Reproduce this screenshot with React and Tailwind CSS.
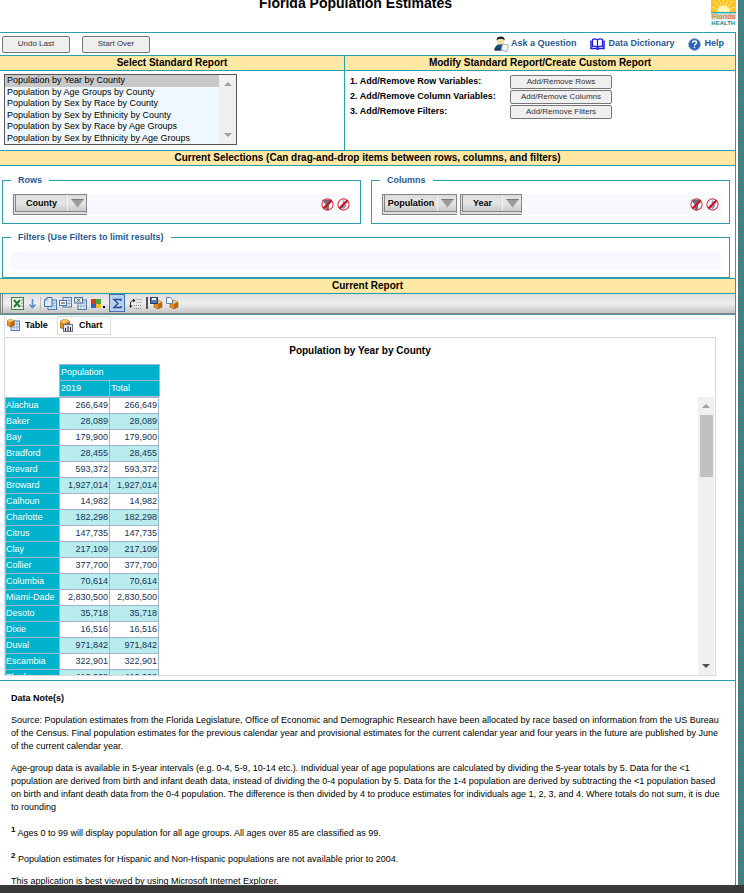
import React from "react";

const reports = [
  "Population by Year by County",
  "Population by Age Groups by County",
  "Population by Sex by Race by County",
  "Population by Sex by Ethnicity by County",
  "Population by Sex by Race by Age Groups",
  "Population by Sex by Ethnicity by Age Groups",
];

const counties = [
  ["Alachua", "266,649"],
  ["Baker", "28,089"],
  ["Bay", "179,900"],
  ["Bradford", "28,455"],
  ["Brevard", "593,372"],
  ["Broward", "1,927,014"],
  ["Calhoun", "14,982"],
  ["Charlotte", "182,298"],
  ["Citrus", "147,735"],
  ["Clay", "217,109"],
  ["Collier", "377,700"],
  ["Columbia", "70,614"],
  ["Miami-Dade", "2,830,500"],
  ["Desoto", "35,718"],
  ["Dixie", "16,516"],
  ["Duval", "971,842"],
  ["Escambia", "322,901"],
  ["Flagler", "110,008"],
];

function Band({ children, className = "" }) {
  return (
    <h2 className={`h-[14px] bg-[#ffe8a3] text-center text-[10px] leading-[14px] font-bold text-black ${className}`}>
      {children}
    </h2>
  );
}

function PushButton({ children, className }) {
  return (
    <button className={`rounded-[2px] border border-[#767676] bg-[#efefef] text-center text-[8px] text-[#333] ${className}`}>
      {children}
    </button>
  );
}

function Logo() {
  return (
    <svg viewBox="0 0 25 26" className="h-[26px] w-[25px] shrink-0" role="img" aria-label="Florida Health">
      <rect width="25" height="12" fill="#fdc41f" />
      <g stroke="#fff3b0" strokeWidth="0.8">
        <path d="M12.5 11 L1 7M12.5 11 L3 1M12.5 11 L8 0M12.5 11 L12.5 0M12.5 11 L17 0M12.5 11 L22 1M12.5 11 L24 7" />
      </g>
      <path d="M6 12a6.5 6.5 0 0 1 13 0z" fill="#fff6b8" />
      <rect y="12" width="25" height="1.5" fill="#2ba8b0" />
      <rect y="13.5" width="25" height="6" fill="#bfe0dc" />
      <text x="1" y="19" fontSize="7" fontWeight="bold" fill="#ee7f3c" fontFamily="Liberation Sans, sans-serif">Florida</text>
      <text x="0.3" y="25" fontSize="6" fontWeight="bold" fill="#008b95" fontFamily="Liberation Sans, sans-serif">HEALTH</text>
    </svg>
  );
}

function PersonIcon() {
  return (
    <svg viewBox="0 0 15 16" className="h-4 w-[15px]" aria-hidden="true">
      <path d="M0.500 14.500q0-6.500 6.500-6.500t6 6.500z" fill="#14507d" />
      <circle cx="6.500" cy="5" r="3.600" fill="#f3dda0" />
      <path d="M2.500 4.500q0-4 4.200-4t4 4q-1-1.800-4-1.800t-4.200 1.800z" fill="#1d1d1d" />
      <path d="M8.500 8l6 1-1.500 6.500-6-1.500z" fill="#f2f2f2" stroke="#888" strokeWidth="0.600" />
      <path d="M0.500 12.500h6v2h-6z" fill="#143a5c" />
    </svg>
  );
}

function BookIcon() {
  return (
    <svg viewBox="0 0 15 12" className="h-3 w-[15px]" aria-hidden="true" fill="none" stroke="#1b1be0">
      <path d="M7.500 9.500V2Q5 0 2.500 1.500V8.500Q5 7.500 7.500 9.500Q10 7.500 12.500 8.500V1.500Q10 0 7.500 2" fill="#fff" strokeWidth="1.200" />
      <path d="M1 2.500V10.500H6.500L7.500 11.500L8.500 10.500H14V2.500" strokeWidth="1.500" />
    </svg>
  );
}

function HelpIcon() {
  return (
    <svg viewBox="0 0 13 13" className="size-[13px]" aria-hidden="true">
      <circle cx="6.500" cy="6.500" r="6" fill="#2d62b8" stroke="#9db7dc" />
      <path d="M4.500 5q0-2 2-2t2 1.700q0 1-1 1.500t-1 1.500" fill="none" stroke="#fff" strokeWidth="1.400" />
      <rect x="5.800" y="8.700" width="1.400" height="1.400" fill="#fff" />
    </svg>
  );
}

function Triangle({ down = false, className = "" }) {
  return (
    <svg viewBox="0 0 8 4" className={`h-1 w-2 ${className}`} aria-hidden="true" fill="currentColor">
      <path d={down ? "M0 0h8L4 4z" : "M0 4h8L4 0z"} />
    </svg>
  );
}

function FieldPill({ label, className }) {
  return (
    <button
      className={`flex h-[21px] items-stretch border-t border-r border-b-[4px] border-l-[3px] border-double border-[#858585] bg-linear-to-b from-[#dcdcdc] via-[#e6e6e6] to-[#c9c9c9] text-[9px] font-bold text-black ${className}`}
    >
      <span className="flex flex-1 items-center justify-center leading-[16px]">{label}</span>
      <span className="flex w-[19px] items-center justify-center border-l border-[#f3f3f3]">
        <svg viewBox="0 0 13 9" className="h-[9px] w-[13px]" aria-hidden="true">
          <path d="M0.500 0.500h12L6.500 8.500z" fill="#9a9a9a" stroke="#b9b9b9" />
          <path d="M0.500 0.500h12" stroke="#777" />
        </svg>
      </span>
    </button>
  );
}

function ClearIcon({ kind }) {
  return (
    <svg viewBox="0 0 13 13" className="size-[13px]" aria-hidden="true" fill="none">
      {kind === "filter" ? (
        <path d="M1.500 2h9L7.500 7v5h-2V7z" fill="#66748a" stroke="#444" strokeWidth="0.600" />
      ) : (
        <path d="M6.500 2.500v7M4 7l2.500 3L9 7" stroke="#7f9dc9" strokeWidth="1.600" />
      )}
      <circle cx="6.500" cy="6.500" r="5.600" stroke="#dc3a44" strokeWidth="1.100" />
      <path d="M2.400 10.600l8.200-8.200" stroke="#d0141f" strokeWidth="2.200" />
    </svg>
  );
}

function Shelf({ title, children }) {
  return (
    <fieldset className="min-w-0 border border-[#2a9dae] px-2 pb-2">
      <legend className="px-[7px] text-[9px] leading-[13px] font-bold text-[#1f5a94]">{title}</legend>
      <div className="mt-[7px] flex h-[21px] items-center gap-[3px] bg-[#f8f8ff] pr-[2px] pl-[2px]">
        {children}
        <div className="ml-auto flex gap-[3px]">
          <button aria-label={`Clear ${title} filters`}><ClearIcon kind="filter" /></button>
          <button aria-label={`Clear ${title} sorting`}><ClearIcon kind="sort" /></button>
        </div>
      </div>
    </fieldset>
  );
}

function Sheet({ x = 4, y = 3 }) {
  return (
    <g>
      <rect x={x} y={y} width="8.500" height="9.500" fill="#eef4fc" stroke="#4d76ad" />
      <path d={`M${x} ${y + 3}h8.500M${x} ${y + 6}h8.500M${x + 3} ${y}v9.500M${x + 6} ${y}v9.500`} stroke="#7d9fcf" strokeWidth="0.800" />
    </g>
  );
}

function Cube({ x = 0, y = 0, s = 1 }) {
  return (
    <g transform={`translate(${x} ${y}) scale(${s})`}>
      <path d="M0 2L4 0l4 2v5L4 9 0 7z" fill="#e48f1e" stroke="#8a4d0a" strokeWidth="0.600" />
      <path d="M0 2l4 2 4-2L4 0z" fill="#f9c265" />
      <path d="M4 4l4-2v5L4 9z" fill="#b9650d" />
    </g>
  );
}

function ToolIcon({ children }) {
  return (
    <svg viewBox="0 0 13 13" className="size-[13px]" aria-hidden="true" fill="none">
      {children}
    </svg>
  );
}

function Tool({ label, className = "", children }) {
  return (
    <button aria-label={label} className={`shrink-0 ${className}`}>
      <ToolIcon>{children}</ToolIcon>
    </button>
  );
}

function Toolbar() {
  return (
    <div className="flex h-5 items-center border-b border-l-[3px] border-double border-[#858585] bg-linear-to-b from-[#dedede] via-[#efefef] to-[#c4c4c4] pb-px pl-2">
      <Tool label="Export to Excel">
        <rect x="0.500" y="0.500" width="12" height="12" fill="#eaf5ea" stroke="#3c8446" />
        <path d="M3 3l6 7M9 3l-6 7" stroke="#217a34" strokeWidth="2" />
        <path d="M10 3h2M10 6h2M10 9h2" stroke="#5aa465" />
      </Tool>
      <Tool label="Sort" className="ml-[2px]">
        <path d="M6.500 2v8M3.500 7.500l3 3 3-3" stroke="#5b8fc0" strokeWidth="1.600" />
      </Tool>
      <span className="ml-px h-[13px] w-px bg-[#bdbdbd]" />
      <Tool label="Copy table" className="ml-[3px]">
        <Sheet />
        <path d="M3 0.500h5v9H0.500V3z" fill="#dce9f8" stroke="#4671ab" />
        <path d="M0.500 3H3V0.500" stroke="#4671ab" strokeWidth="0.800" />
      </Tool>
      <Tool label="Collapse rows" className="ml-[2px]">
        <Sheet y={0.5} x={4} />
        <rect x="0.500" y="3.500" width="7" height="5" fill="#fff" stroke="#4671ab" />
        <path d="M2 6h4" stroke="#333" />
      </Tool>
      <Tool label="Hide empty" className="ml-[2px]">
        <Sheet />
        <rect x="0.500" y="0.500" width="8" height="5.500" fill="#f2f6ea" stroke="#4671ab" />
        <path d="M2.500 1.500l4 3.500M6.500 1.500l-4 3.500" stroke="#555e2c" />
      </Tool>
      <Tool label="Colors" className="ml-[3px]">
        <rect x="1" y="2" width="5" height="5" fill="#d63a2d" />
        <rect x="6" y="2" width="5" height="5" fill="#4fa63b" />
        <rect x="1" y="7" width="5" height="4" fill="#2769c7" />
        <rect x="6" y="7" width="5" height="4" fill="#f4bd27" />
      </Tool>
      <span className="mt-2 h-[2px] w-[2px] bg-black" />
      <Tool label="Totals" className="ml-1 h-[18px] w-4 border border-[#3c6fb5] bg-[#b9d0f0] px-px">
        <path d="M10 4V2.500H3l4 4-4 4h7V9" stroke="#254f92" strokeWidth="1.400" />
      </Tool>
      <Tool label="Swap axes" className="ml-1">
        <path d="M1.500 10V6q0-2.500 3-2.500" stroke="#333" />
        <path d="M4 1.500l2.500 2-2.500 2zM0 8.500h3.500L1.500 11z" fill="#222" />
        <path d="M7.500 2.500h5M7.500 5.500h5M5 8.500h7.500M5 11.500h7.500" stroke="#888" strokeDasharray="1 1" />
      </Tool>
      <span className="ml-[4px] h-3 w-[2px] bg-[#555]" />
      <Tool label="Save view" className="ml-[2px]">
        <Cube x={4} y={3} />
        <rect x="0.500" y="0.500" width="7" height="6" fill="#4f79b8" stroke="#253e6b" />
        <path d="M2 1h4v2H2z" fill="#fff" />
      </Tool>
      <Tool label="Open view" className="ml-[3px]">
        <Cube x={4} y={3} />
        <path d="M0.500 0.500h4l2 2v4h-6z" fill="#fff" stroke="#5f86b8" />
      </Tool>
    </div>
  );
}

function CountyTable() {
  return (
    <table className="border-collapse text-[9px] leading-[12px] text-[#16325c]">
      <tbody>
        {counties.map(([name, value], i) => (
          <tr key={name} className={`h-4 ${i % 2 ? "bg-[#b9eced]" : "bg-white"}`}>
            <th scope="row" className="w-[54px] border border-[#a3b5cc] bg-[#00b2cb] p-0 pb-[2px] text-left font-normal whitespace-nowrap text-white">
              {name}
            </th>
            <td className="w-[50px] border border-[#a3b5cc] p-0 pr-px pb-[2px] text-right">{value}</td>
            <td className="w-[49px] border border-[#a3b5cc] p-0 pr-px pb-[2px] text-right">{value}</td>
          </tr>
        ))}
      </tbody>
    </table>
  );
}

export default function App() {
  return (
    <div className="flex h-screen flex-col overflow-hidden bg-white font-['Liberation_Sans',Arial,sans-serif] text-black">
      <div className="flex min-h-0 flex-1">
        <div className="min-w-0 flex-1 overflow-hidden">
          <header className="flex h-8">
            <h1 className="flex-1 text-center text-[14px] leading-[6px] font-bold">Florida Population Estimates</h1>
            <Logo />
          </header>

          <main className="border-t border-r border-[#2a9dae]">
            <div className="flex h-[22px] items-center pr-[11px] pl-[2px]">
              <PushButton className="h-[17px] w-[68px]">Undo Last</PushButton>
              <PushButton className="ml-3 h-[17px] w-[68px]">Start Over</PushButton>
              <nav className="ml-auto flex items-center gap-[14px] text-[9px] font-bold text-[#1f5a94]">
                <a href="#ask" className="flex items-center gap-[2px]"><PersonIcon />Ask a Question</a>
                <a href="#dictionary" className="flex items-center gap-[3px]"><BookIcon />Data Dictionary</a>
                <a href="#help" className="flex items-center gap-[3px]"><HelpIcon />Help</a>
              </nav>
            </div>

            <div className="grid grid-cols-[344fr_391fr] border-y border-[#2a9dae]">
              <section>
                <Band>Select Standard Report</Band>
                <div className="h-20 border-t border-[#2a9dae] px-1 pt-[3px]">
                  <div className="flex h-[71px] w-[233px] border border-[#555] bg-[#f0f8ff]">
                    <select
                      size={6}
                      defaultValue={reports[0]}
                      aria-label="Standard report"
                      className="h-[69px] min-w-0 flex-1 overflow-hidden bg-[#f0f8ff] p-0 text-[9px] outline-none"
                    >
                      {reports.map((name, i) => (
                        <option
                          key={name}
                          value={name}
                          className={`min-h-0 p-0 pl-[2px] odd:h-[12px] odd:leading-[12px] even:h-[11px] even:leading-[11px] ${i ? "" : "bg-[#c8c8c8] text-black"}`}
                        >
                          {name}
                        </option>
                      ))}
                    </select>
                    <div className="flex w-[17px] flex-col items-center justify-between bg-[#f0f0f0] py-[7px] text-[#a0a0a0]">
                      <Triangle />
                      <Triangle down />
                    </div>
                  </div>
                </div>
              </section>
              <section className="border-l border-[#2a9dae]">
                <Band>Modify Standard Report/Create Custom Report</Band>
                <div className="h-20 border-t border-[#2a9dae] pt-1 pl-[5px]">
                  {[
                    ["1. Add/Remove Row Variables:", "Add/Remove Rows"],
                    ["2. Add/Remove Column Variables:", "Add/Remove Columns"],
                    ["3. Add/Remove Filters:", "Add/Remove Filters"],
                  ].map(([label, action]) => (
                    <div key={action} className="flex h-[15px]">
                      <span className="w-[160px] text-[9px] leading-[13px] font-bold">{label}</span>
                      <PushButton className="h-[14px] w-[102px] leading-[12px]">{action}</PushButton>
                    </div>
                  ))}
                </div>
              </section>
            </div>

            <Band>Current Selections (Can drag-and-drop items between rows, columns, and filters)</Band>
            <div className="border-t border-[#2a9dae] pt-2 pr-[5px] pl-[2px]">
              <div className="grid grid-cols-2 gap-[10px]">
                <Shelf title="Rows">
                  <FieldPill label="County" className="w-[74px]" />
                </Shelf>
                <Shelf title="Columns">
                  <FieldPill label="Population" className="w-[75px]" />
                  <FieldPill label="Year" className="w-[62px]" />
                </Shelf>
              </div>
              <fieldset className="mt-[7px] border border-[#2a9dae] px-2 pb-[7px]">
                <legend className="px-[7px] text-[9px] leading-[13px] font-bold text-[#1f5a94]">
                  Filters (Use Filters to limit results)
                </legend>
                <div className="mt-2 h-[18px] bg-[#f8f8ff]" />
              </fieldset>
            </div>

            <Band className="box-content border-y border-[#2a9dae]">Current Report</Band>
            <Toolbar />
            <div className="border-t border-[#4a9ba6] pr-[19px] pb-1 pl-1">
              <div role="tablist" className="flex h-[22px] items-start pt-px text-[9px] font-bold">
                <button role="tab" aria-selected="true" className="flex h-[19px] w-[53px] items-center gap-[5px] border-l border-[#ddd] pl-[2px]">
                  <ToolIcon><Sheet x={4} y={2} /><Cube x={0} y={0} s={0.9} /></ToolIcon>
                  Table
                </button>
                <button role="tab" aria-selected="false" className="flex h-[19px] w-[54px] items-center gap-[6px] border border-[#ddd] pl-[2px]">
                  <ToolIcon>
                    <Cube x={0} y={0} s={1.2} />
                    <rect x="3.500" y="5.500" width="9" height="7" fill="#e4e9f2" stroke="#5f6f88" />
                    <path d="M5.500 12V9M8 12V7M10.500 12V8" stroke="#222" />
                  </ToolIcon>
                  Chart
                </button>
              </div>

              <section className="border border-[#d9d9d9]">
                <h3 className="pt-[6px] text-center text-[10px] leading-[14px] font-bold">Population by Year by County</h3>
                <table className="mt-[6px] ml-[54px] border-collapse bg-[#00b2cb] text-[9px] leading-[12px] text-white">
                  <thead>
                    <tr className="h-4">
                      <th colSpan={2} className="border border-[#a3b5cc] p-0 pb-[2px] pl-px text-left font-normal">Population</th>
                    </tr>
                    <tr className="h-4">
                      <th className="w-[50px] border border-[#a3b5cc] p-0 pb-[2px] pl-px text-left font-normal">2019</th>
                      <th className="w-[50px] border border-[#a3b5cc] p-0 pb-[2px] pl-px text-left font-normal">Total</th>
                    </tr>
                  </thead>
                </table>
                <div className="flex h-[278px] overflow-hidden pr-px">
                  <div className="min-w-0 flex-1 overflow-hidden">
                    <CountyTable />
                  </div>
                  <div className="flex w-4 flex-col items-center bg-[#f0f0f0] py-[7px]">
                    <Triangle className="text-[#a0a0a0]" />
                    <div className="mt-[7px] h-[62px] w-[13px] bg-[#c1c1c1]" />
                    <Triangle down className="mt-auto text-[#505050]" />
                  </div>
                </div>
              </section>
            </div>

            <section className="border-t border-[#2a9dae] pt-[11px] pr-[11px] pb-4 pl-[11px] text-[9px] leading-[13px]">
              <h3 className="font-bold">Data Note(s)</h3>
              <p className="mt-[9px]">
                Source: Population estimates from the Florida Legislature, Office of Economic and Demographic Research have
                been allocated by race based on information from the US Bureau of the Census. Final population estimates for
                the previous calendar year and provisional estimates for the current calendar year and four years in the
                future are published by June of the current calendar year.
              </p>
              <p className="mt-[9px]">
                Age-group data is available in 5-year intervals (e.g. 0-4, 5-9, 10-14 etc.). Individual year of age
                populations are calculated by dividing the 5-year totals by 5. Data for the &lt;1 population are derived from
                birth and infant death data, instead of dividing the 0-4 population by 5. Data for the 1-4 population are
                derived by subtracting the &lt;1 population based on birth and infant death data from the 0-4 population. The
                difference is then divided by 4 to produce estimates for individuals age 1, 2, 3, and 4. Where totals do not
                sum, it is due to rounding
              </p>
              <p className="mt-[13px]">
                <sup className="text-[8px] font-bold">1</sup> Ages 0 to 99 will display population for all age groups. All
                ages over 85 are classified as 99.
              </p>
              <p className="mt-[13px]">
                <sup className="text-[8px] font-bold">2</sup> Population estimates for Hispanic and Non-Hispanic populations
                are not available prior to 2004.
              </p>
              <p className="mt-[9px]">This application is best viewed by using Microsoft Internet Explorer.</p>
            </section>
          </main>
        </div>
        <div className="ml-[2px] w-[6px] shrink-0 bg-[repeating-linear-gradient(#3f8389_0px,#3f8389_2px,#5c7577_2px,#5c7577_3px)]" />
      </div>
      <footer className="h-2 shrink-0 bg-[#3a3a3a]" />
    </div>
  );
}
